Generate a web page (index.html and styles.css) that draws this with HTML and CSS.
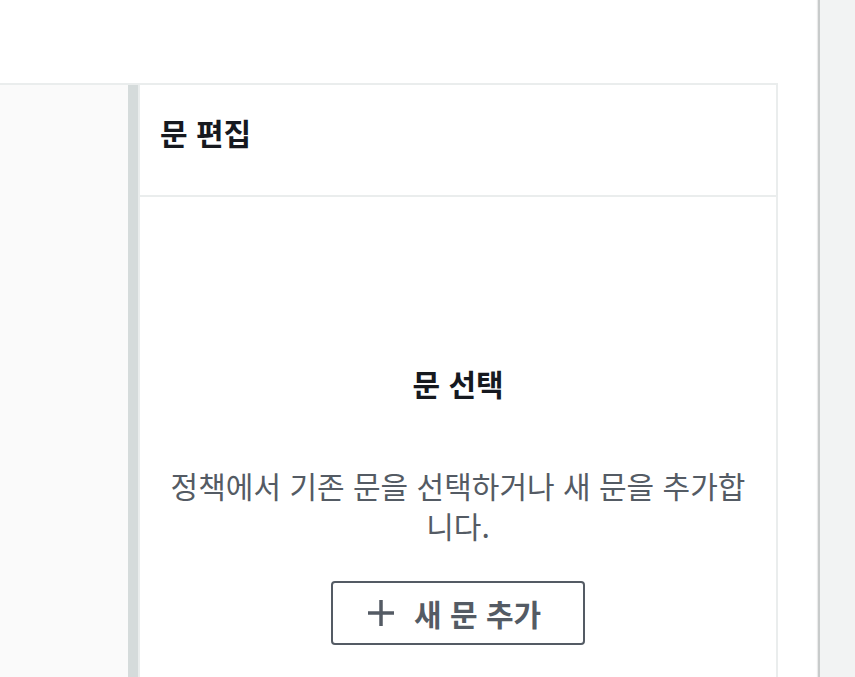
FILE: index.html
```html
<!DOCTYPE html>
<html lang="ko">
<head>
<meta charset="utf-8">
<title>문 편집</title>
<link rel="stylesheet" href="styles.css">
</head>
<body>
<div class="main">
  <div class="editor">
    <div class="tree"></div>
    <div class="resizer"></div>
    <section class="card">
      <header class="card-header">
        <h2 class="card-title">문 편집</h2>
      </header>
      <div class="card-body">
        <h3 class="empty-title">문 선택</h3>
        <p class="empty-text">정책에서 기존 문을 선택하거나 새 문을 추가합니다.</p>
        <button class="add-btn" type="button">
          <svg class="add-icon" width="28" height="28" viewBox="0 0 28 28" aria-hidden="true">
            <path d="M14 1v26M1 14h26" stroke="currentColor" stroke-width="3.5" fill="none"/>
          </svg>
          <span class="add-label">새 문 추가</span>
        </button>
      </div>
    </section>
  </div>
</div>
<aside class="sidebar"></aside>
</body>
</html>
```

FILE: styles.css
```css
html, body {
  margin: 0;
  padding: 0;
  height: 100%;
}

body {
  display: flex;
  overflow: hidden;
  font-family: "Noto Sans CJK KR", "Noto Sans", sans-serif;
  background: #ffffff;
}

.main {
  flex: 1;
  padding-top: 83px;
  background: #ffffff;
  display: flex;
  flex-direction: column;
}

.sidebar {
  width: 35px;
  flex: none;
  background: #f2f3f3;
  border-left: 2px solid #c8cbcb;
  box-shadow: -1px 0 1px rgba(0, 0, 0, 0.08);
}

.editor {
  flex: 1;
  display: flex;
  margin-right: 40px;
  border-top: 2px solid #eaeded;
}

.tree {
  width: 128px;
  flex: none;
  background: #fafafa;
}

.resizer {
  width: 10px;
  flex: none;
  background: #d5dbdb;
}

.card {
  flex: 1;
  border-left: 2px solid #eaeded;
  border-right: 2px solid #eaeded;
  background: #ffffff;
  display: flex;
  flex-direction: column;
}

.card-header {
  height: 112px;
  box-sizing: border-box;
  border-bottom: 2px solid #eaeded;
  padding: 27px 0 0 20px;
}

.card-title {
  margin: 0;
  font-size: 30px;
  line-height: 40px;
  font-weight: 700;
  color: #16191f;
}

.card-body {
  padding: 0 20px;
  text-align: center;
}

.empty-title {
  margin: 166px 0 0;
  font-size: 30px;
  line-height: 40px;
  font-weight: 700;
  color: #16191f;
}

.empty-text {
  margin: 62px 0 0;
  font-size: 30px;
  line-height: 40px;
  color: #545b64;
}

.add-btn {
  margin-top: 36px;
  width: 254px;
  height: 64px;
  box-sizing: border-box;
  border: 2px solid #545b64;
  border-radius: 4px;
  background: #ffffff;
  color: #545b64;
  display: inline-flex;
  align-items: center;
  padding: 0 0 0 34px;
  gap: 19px;
  font-family: inherit;
  font-size: 30px;
  font-weight: 700;
}

.add-icon {
  flex: none;
}

.add-label {
  line-height: 40px;
}
```
